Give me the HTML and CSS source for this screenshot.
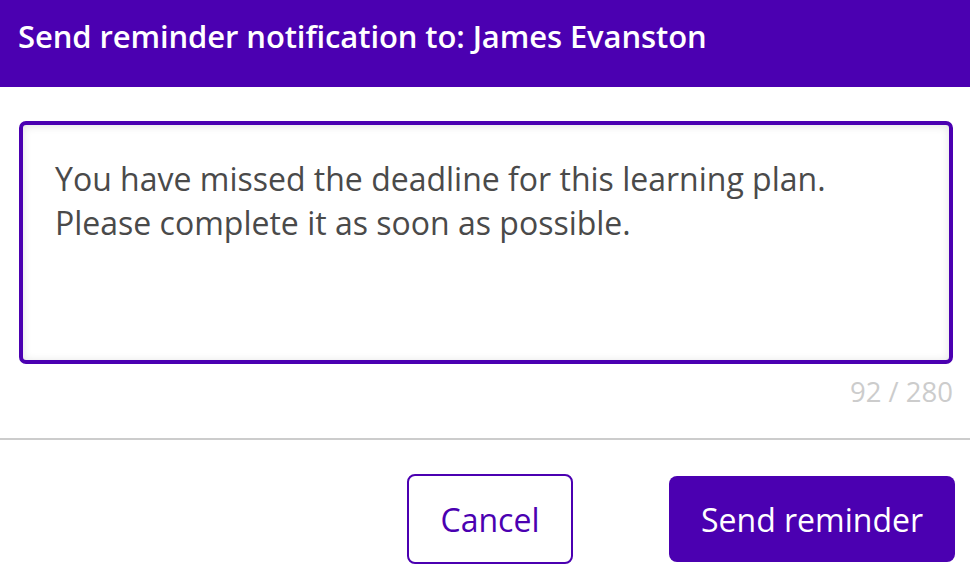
FILE: index.html
```html
<!DOCTYPE html>
<html>
<head>
<meta charset="utf-8">
<link rel="stylesheet" href="styles.css">
</head>
<body>
<div class="dialog">
  <header class="dialog-header">
    <h1 class="dialog-title">Send reminder notification to: James Evanston</h1>
  </header>
  <section class="dialog-body">
    <textarea class="message" readonly>You have missed the deadline for this learning plan.
Please complete it as soon as possible.</textarea>
    <div class="counter">92 / 280</div>
  </section>
  <footer class="dialog-footer">
    <button class="btn btn-outline">Cancel</button>
    <button class="btn btn-primary">Send reminder</button>
  </footer>
</div>
</body>
</html>
```

FILE: styles.css
```css
html, body {
  margin: 0;
  padding: 0;
  background: #ffffff;
}
body {
  font-family: "Open Sans", "Noto Sans", sans-serif;
}
.dialog {
  width: 970px;
  height: 584px;
  display: flex;
  flex-direction: column;
}
.dialog-header {
  background: #4b00b1;
  height: 87px;
  box-sizing: border-box;
  padding: 14px 0 0 18px;
}
.dialog-title {
  margin: 0;
  color: #ffffff;
  font-weight: 600;
  font-size: 31px;
  line-height: 44px;
  letter-spacing: -0.1px;
}
.dialog-body {
  padding: 34px 17px 0 19px;
  display: flex;
  flex-direction: column;
  border-bottom: 2px solid #cccccc;
  height: 353px;
  box-sizing: border-box;
}
.message {
  display: block;
  width: 100%;
  height: 243px;
  box-sizing: border-box;
  border: 4px solid #4b00b1;
  border-radius: 7px;
  background: #ffffff;
  box-shadow: inset 0 1px 8px rgba(0,0,0,0.12);
  padding: 32px 32px;
  font-family: "Open Sans", "Noto Sans", sans-serif;
  font-size: 32px;
  line-height: 44px;
  color: #4a4a4a;
  resize: none;
  outline: none;
  overflow: hidden;
  margin: 0;
}
.counter {
  text-align: right;
  color: #cccccc;
  font-size: 27.5px;
  line-height: 40px;
  margin-top: 8px;
}
.dialog-footer {
  display: flex;
  justify-content: flex-end;
  align-items: center;
  gap: 96px;
  padding: 34px 15px 0 0;
}
.btn {
  font-family: "Open Sans", "Noto Sans", sans-serif;
  font-size: 32px;
  border-radius: 8px;
  box-sizing: border-box;
  cursor: pointer;
  padding: 0;
}
.btn-outline {
  width: 166px;
  height: 90px;
  background: #ffffff;
  color: #4b00b1;
  border: 2px solid #4b00b1;
}
.btn-primary {
  width: 286px;
  height: 86px;
  background: #4b00b1;
  color: #ffffff;
  border: none;
}
```
